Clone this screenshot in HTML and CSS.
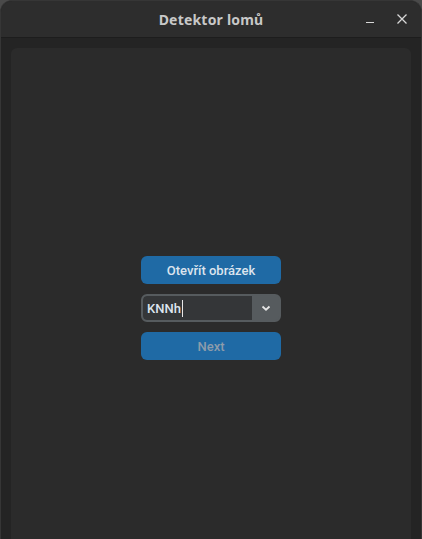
FILE: index.html
```html
<!DOCTYPE html>
<html lang="cs">
<head>
<meta charset="utf-8">
<title>Detektor lomů</title>
<link rel="stylesheet" href="styles.css">
</head>
<body>
<div class="window">
  <header class="titlebar">
    <div class="title">Detektor lomů</div>
    <div class="controls">
      <svg class="ctl" width="16" height="16" viewBox="0 0 16 16"><path d="M4 11.5h8" stroke="#d8d8d8" stroke-width="1.2"/></svg>
      <svg class="ctl" width="16" height="16" viewBox="0 0 16 16"><path d="M3.5 3.5l9 9M12.5 3.5l-9 9" stroke="#d8d8d8" stroke-width="1.3"/></svg>
    </div>
  </header>
  <main class="content">
    <section class="panel">
      <div class="stack">
        <button class="btn">Otevřít obrázek</button>
        <div class="combo">
          <div class="combo-entry"><span class="combo-text">KNNh</span><span class="caret"></span></div>
          <div class="combo-arrow">
            <svg width="10" height="8" viewBox="0 0 10 8"><path d="M1.5 2.5l3.5 3.2 3.5-3.2" fill="none" stroke="#e6e6e6" stroke-width="1.8"/></svg>
          </div>
        </div>
        <button class="btn btn-disabled">Next</button>
      </div>
    </section>
  </main>
</div>
</body>
</html>
```

FILE: styles.css
```css
html, body {
  margin: 0;
  padding: 0;
  background: #4a4a4a;
  height: 100%;
  overflow: hidden;
}
.window {
  width: 422px;
  height: 539px;
  box-sizing: border-box;
  border-radius: 12px 12px 0 0;
  background: #242424;
  border: 1px solid #363636;
  border-bottom: none;
  overflow: hidden;
  display: flex;
  flex-direction: column;
}
.titlebar {
  height: 36px;
  background: #2d2d2d;
  border-bottom: 1px solid #1d1d1d;
  position: relative;
  display: flex;
  align-items: center;
  justify-content: center;
  flex-shrink: 0;
}
.title {
  font-family: "Noto Sans", "DejaVu Sans", sans-serif;
  font-weight: 700;
  font-size: 14px;
  color: #c8c8c8;
  letter-spacing: 0.2px;
}
.controls {
  position: absolute;
  right: 11px;
  top: 10px;
  display: flex;
  gap: 16px;
}
.ctl { display: block; }
.content {
  flex: 1;
  padding: 10px 10px 0 10px;
  display: flex;
}
.panel {
  flex: 1;
  background: #2b2b2b;
  border-radius: 6px 6px 0 0;
  display: flex;
  justify-content: center;
  padding-top: 208px;
}
.stack {
  width: 140px;
  display: flex;
  flex-direction: column;
  gap: 10px;
}
.btn {
  height: 28px;
  border: none;
  border-radius: 6px;
  background: #1f6aa5;
  color: #dce4ee;
  font-family: Roboto, "Liberation Sans", sans-serif;
  font-size: 13px;
  font-weight: 500;
  padding: 0;
}
.btn-disabled {
  color: #8d9cab;
}
.combo {
  height: 28px;
  box-sizing: border-box;
  border: 2px solid #565b5e;
  border-radius: 6px;
  background: #565b5e;
  display: flex;
  overflow: hidden;
}
.combo-entry {
  flex: 1;
  background: #343638;
  border-radius: 4px 0 0 4px;
  display: flex;
  align-items: center;
  padding-left: 4px;
  font-family: Roboto, "Liberation Sans", sans-serif;
  font-size: 13px;
  font-weight: 500;
  color: #dce4ee;
}
.caret {
  width: 1px;
  height: 17px;
  background: #e8e8e8;
  margin-left: 1px;
}
.combo-arrow {
  width: 27px;
  display: flex;
  align-items: center;
  justify-content: center;
}
.combo-arrow svg { display: block; }
```
